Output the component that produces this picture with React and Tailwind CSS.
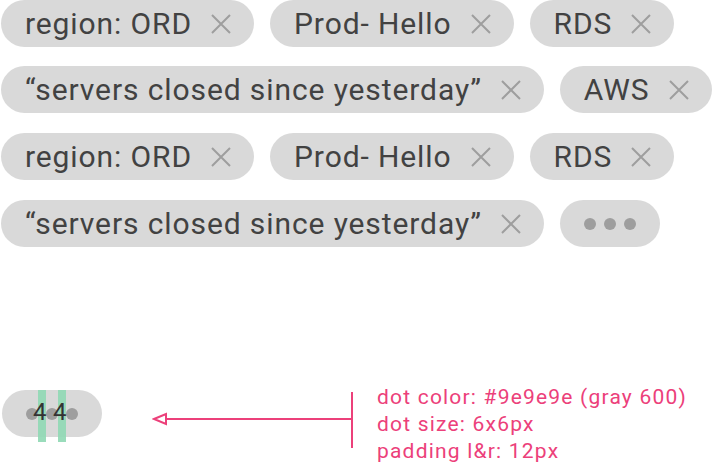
import React from 'react';

const CloseIcon = () => (
  <svg width="20" height="20" viewBox="0 0 20 20" className="shrink-0">
    <path d="M1 1 L19 19 M19 1 L1 19" stroke="#9e9e9e" strokeWidth="2" fill="none" />
  </svg>
);

const Chip = ({ label }) => (
  <div className="flex h-[47px] shrink-0 items-center gap-[19px] rounded-full bg-[#d9d9d9] pl-[24px] pr-[23px]">
    <span className="text-[30px] leading-none tracking-[0.9px] text-[#424242] whitespace-nowrap">{label}</span>
    <CloseIcon />
  </div>
);

const Dot = () => <span className="block h-[12px] w-[12px] rounded-full bg-[#9e9e9e]" />;

const MoreChip = () => (
  <div className="flex h-[47px] w-[100px] shrink-0 items-center gap-[8px] rounded-full bg-[#d9d9d9] px-[24px]">
    <Dot />
    <Dot />
    <Dot />
  </div>
);

const Row = ({ className = '', children }) => (
  <div className={`flex gap-4 ${className}`}>{children}</div>
);

export default function App() {
  return (
    <div className="relative h-[468px] w-[712px] overflow-hidden bg-white pl-[1px] font-['Roboto',sans-serif]">
      <Row>
        <Chip label="region: ORD" />
        <Chip label="Prod- Hello" />
        <Chip label="RDS" />
      </Row>
      <Row className="mt-[19px]">
        <Chip label="“servers closed since yesterday”" />
        <Chip label="AWS" />
      </Row>
      <Row className="mt-[20px]">
        <Chip label="region: ORD" />
        <Chip label="Prod- Hello" />
        <Chip label="RDS" />
      </Row>
      <Row className="mt-[20px]">
        <Chip label="“servers closed since yesterday”" />
        <MoreChip />
      </Row>

      {/* spec callout */}
      <div className="mt-[143px] flex items-start">
        <div className="relative ml-[1px] flex h-[47px] w-[100px] items-center gap-[8px] rounded-full bg-[#d9d9d9] px-[24px]">
          <Dot />
          <Dot />
          <Dot />
          <span className="absolute left-[36px] top-0 h-[52px] w-[8px] bg-[#8fd8b4]/90" />
          <span className="absolute left-[56px] top-0 h-[52px] w-[8px] bg-[#8fd8b4]/90" />
          <span className="absolute left-[31px] top-[10px] text-[24px] leading-none text-[#333]">4</span>
          <span className="absolute left-[51px] top-[10px] text-[24px] leading-none text-[#333]">4</span>
        </div>
        <svg width="206" height="58" viewBox="0 0 206 58" className="ml-[50px] mt-[2px] shrink-0">
          <path d="M14 27 H200" stroke="#ec407a" strokeWidth="2" fill="none" />
          <path d="M2 27 L14 22 L14 32 Z" stroke="#ec407a" strokeWidth="2" fill="white" strokeLinejoin="miter" />
          <path d="M200 0 V56" stroke="#ec407a" strokeWidth="2" fill="none" />
        </svg>
        <div className="ml-[19px] mt-[-6px] text-[21px] leading-[27px] tracking-[1.2px] text-[#ec407a]">
          <div>dot color: #9e9e9e (gray 600)</div>
          <div>dot size: 6x6px</div>
          <div>padding l&amp;r: 12px</div>
        </div>
      </div>
    </div>
  );
}
